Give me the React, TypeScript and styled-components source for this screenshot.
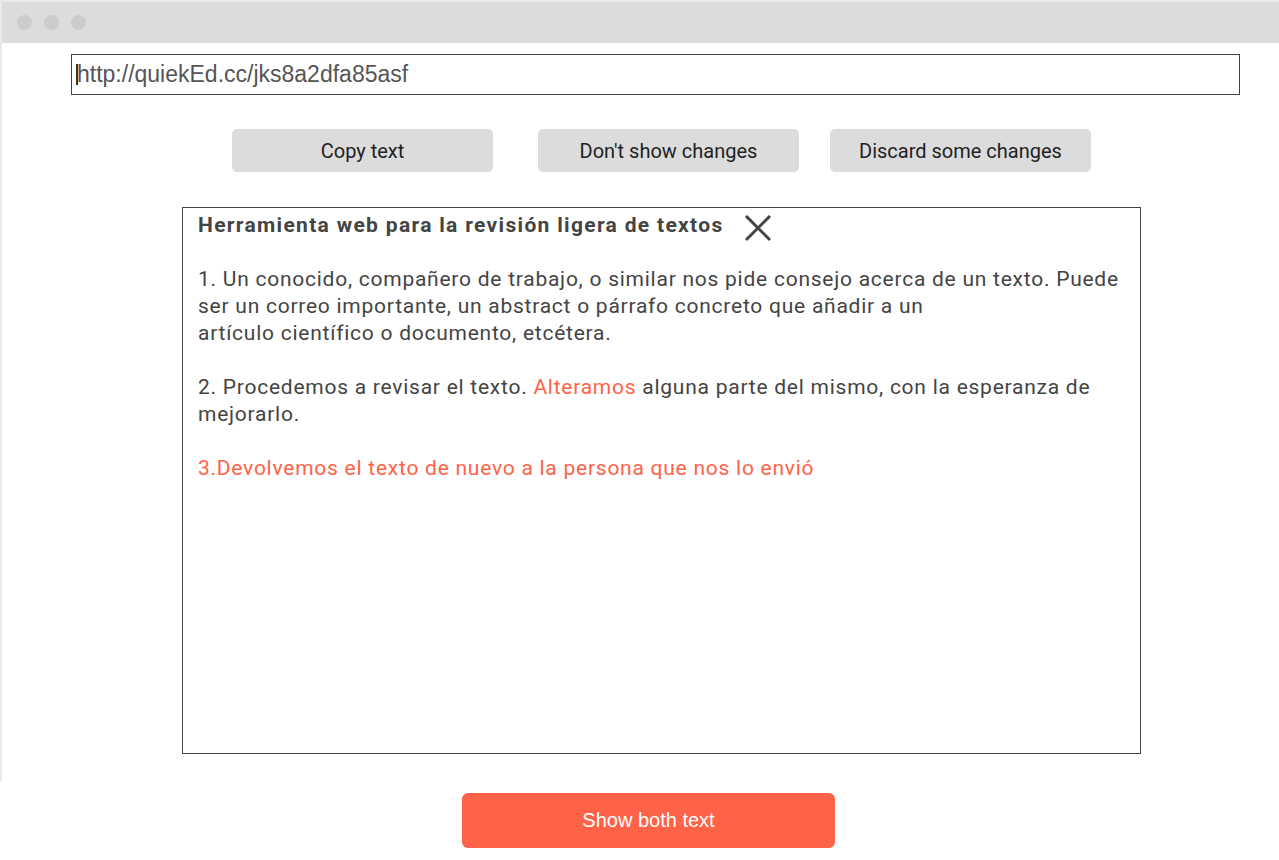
import React from "react";
import styled, { createGlobalStyle } from "styled-components";

const GlobalStyle = createGlobalStyle`
  html, body {
    margin: 0;
    padding: 0;
    background: #ffffff;
  }
  body {
    font-family: Roboto, "Liberation Sans", Arial, sans-serif;
    color: #444444;
    overflow: hidden;
  }
`;

const Window = styled.div`
  height: 779px;
  border-top: 2px solid #e8e8e8;
  border-left: 2px solid #e8e8e8;
  display: flex;
  flex-direction: column;
`;

const TitleBar = styled.div`
  height: 41px;
  background: #dcdcdc;
  display: flex;
  align-items: center;
  gap: 12px;
  padding-left: 15px;
`;

const Dot = styled.span`
  width: 15px;
  height: 15px;
  border-radius: 50%;
  background: #cccccc;
`;

const UrlBar = styled.div`
  margin: 11px 0 0 69px;
  width: 1169px;
  height: 41px;
  box-sizing: border-box;
  border: 1px solid #444444;
  display: flex;
  align-items: center;
  padding-left: 4px;
  font-family: "Liberation Sans", Arial, sans-serif;
  font-size: 23px;
  color: #555555;
`;

const Caret = styled.span`
  width: 2px;
  height: 21px;
  background: #333333;
  margin-right: -1px;
`;

const ButtonRow = styled.div`
  display: flex;
  margin-top: 34px;
  padding-left: 230px;
`;

const GreyButton = styled.button<{ $offset: number }>`
  margin-left: ${(p) => p.$offset}px;
  width: 261px;
  height: 43px;
  border: none;
  border-radius: 5px;
  background: #dcdcdc;
  font-family: Roboto, "Liberation Sans", sans-serif;
  font-size: 20px;
  color: #222222;
  padding: 1px 0 0 0;
`;

const TextBox = styled.div`
  margin: 35px 0 0 180px;
  width: 959px;
  height: 547px;
  box-sizing: border-box;
  border: 1px solid #444444;
  padding: 4px 5px 0 15px;
`;

const Heading = styled.div`
  display: flex;
  align-items: center;
  height: 27px;
  margin-bottom: 27px;
  gap: 20px;
`;

const HeadingText = styled.span`
  font-weight: bold;
  font-size: 21px;
  line-height: 27px;
  letter-spacing: 1.32px;
  color: #444444;
`;

const CloseIcon = styled.svg`
  width: 28px;
  height: 28px;
  margin-top: 6px;
`;

const Para = styled.p`
  margin: 0 0 27px 0;
  font-size: 21px;
  line-height: 27px;
  letter-spacing: 0.75px;
  color: #444444;
`;

const Mark = styled.span`
  color: #ff6347;
`;

const Footer = styled.div`
  padding: 12px 0 0 462px;
`;

const ShowButton = styled.button`
  width: 373px;
  height: 55px;
  border: none;
  border-radius: 6px;
  background: #ff6347;
  color: #ffffff;
  font-family: "Liberation Sans", Arial, sans-serif;
  font-size: 20px;
  padding: 0;
`;

const App = () => {
  return (
    <>
      <GlobalStyle />
      <Window>
        <TitleBar>
          <Dot />
          <Dot />
          <Dot />
        </TitleBar>
        <UrlBar>
          <Caret />
          http://quiekEd.cc/jks8a2dfa85asf
        </UrlBar>
        <ButtonRow>
          <GreyButton $offset={0}>Copy text</GreyButton>
          <GreyButton $offset={45}>Don't show changes</GreyButton>
          <GreyButton $offset={31}>Discard some changes</GreyButton>
        </ButtonRow>
        <TextBox>
          <Heading>
            <HeadingText>Herramienta web para la revisión ligera de textos</HeadingText>
            <CloseIcon viewBox="0 0 28 28">
              <path d="M2 1 L26 25 M26 1 L2 25" stroke="#444444" strokeWidth="3" fill="none" />
            </CloseIcon>
          </Heading>
          <Para>
            1. Un conocido, compañero de trabajo, o similar nos pide consejo acerca de un texto. Puede
            ser un correo importante, un abstract o párrafo concreto que añadir a un
            <br />
            artículo científico o documento, etcétera.
          </Para>
          <Para>
            2. Procedemos a revisar el texto. <Mark>Alteramos</Mark> alguna parte del mismo, con la
            esperanza de mejorarlo.
          </Para>
          <Para>
            <Mark>3.Devolvemos el texto de nuevo a la persona que nos lo envió</Mark>
          </Para>
        </TextBox>
      </Window>
      <Footer>
        <ShowButton>Show both text</ShowButton>
      </Footer>
    </>
  );
};

export default App;
